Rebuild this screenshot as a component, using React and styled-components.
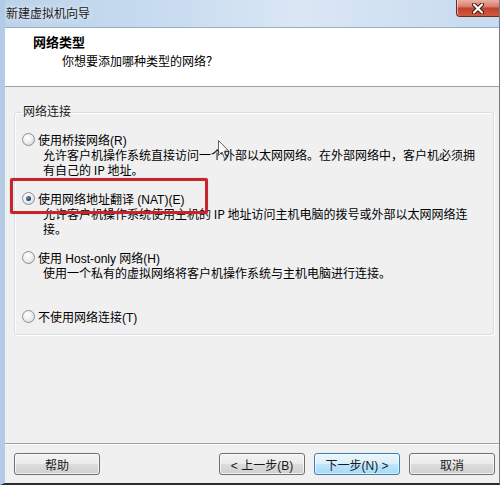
import React from "react";
import styled, { createGlobalStyle, css } from "styled-components";

const GlobalStyle = createGlobalStyle`
  html,
  body {
    margin: 0;
    padding: 0;
    background: #f0f0f0;
  }

  body {
    font-family: "Liberation Sans", "Noto Sans CJK SC", sans-serif;
    font-size: 12px;
    color: #000;
  }
`;

const Window = styled.div`
  width: 500px;
  height: 485px;
  box-sizing: border-box;
  display: flex;
  flex-direction: column;
  border-left: 5px solid #b4cbe6;
  border-right: 1px solid #6f7c8c;
  border-bottom: 2px solid #2b2b2b;
  background: #f0f0f0;
  overflow: hidden;
`;

const TitleBar = styled.div`
  height: 27px;
  flex-shrink: 0;
  display: flex;
  align-items: flex-start;
  margin-left: -5px;
  padding-left: 6px;
  background: linear-gradient(
    to right,
    #bcd2ea 0%,
    #c9dcf0 35%,
    #dae7f5 60%,
    #c7daef 100%
  );
`;

const TitleText = styled.span`
  line-height: 28px;
  color: #1a1a1a;
  text-shadow: 0 0 6px rgba(255, 255, 255, 0.9);
`;

const CloseButton = styled.div`
  margin-left: auto;
  width: 43px;
  height: 17px;
  box-sizing: border-box;
  display: flex;
  align-items: center;
  justify-content: center;
  border: 1px solid #6b2a22;
  border-top: none;
  border-right: none;
  border-radius: 0 0 0 4px;
  background: linear-gradient(
    #eab0a3 0%,
    #d8806f 40%,
    #c2412f 52%,
    #cf5a40 100%
  );
  box-shadow: inset 1px 0 0 rgba(255, 255, 255, 0.5);
`;

const Header = styled.div`
  height: 60px;
  flex-shrink: 0;
  box-sizing: border-box;
  background: #fff;
  border-top: 1px solid #98adc6;
  border-bottom: 1px solid #a0a0a0;
  padding: 7px 0 0 28px;
`;

const HeaderTitle = styled.div`
  font-weight: bold;
  font-size: 13px;
  line-height: 16px;
`;

const HeaderSubtitle = styled.div`
  margin-top: 3px;
  padding-left: 29px;
  line-height: 16px;
`;

const Body = styled.div`
  flex: 1;
  padding: 17px 5px 0 9px;
`;

const GroupBox = styled.fieldset`
  margin: 0;
  padding: 11px 7px 10px 7px;
  border: 1px solid #d5dfe5;
  border-radius: 3px;
  box-shadow: inset 1px 1px 0 #fff, 1px 1px 0 #fff;
`;

const GroupLabel = styled.legend`
  padding: 0 1px;
  line-height: 16px;
  color: #1c1c1c;
`;

const OptionRow = styled.div`
  position: relative;
  & + & {
    margin-top: 13px;
  }
`;

const LabelLine = styled.div`
  display: flex;
  align-items: center;
  gap: 3px;
  height: 16px;
  white-space: nowrap;
`;

const Radio = styled.span`
  width: 13px;
  height: 13px;
  box-sizing: border-box;
  flex-shrink: 0;
  border-radius: 50%;
  border: 1px solid #8c8f94;
  background: radial-gradient(circle at 40% 35%, #ffffff 0%, #e9ecef 55%, #c9ced4 100%);
  display: flex;
  align-items: center;
  justify-content: center;

  ${props =>
    props.checked &&
    css`
      &::after {
        content: "";
        width: 5px;
        height: 5px;
        border-radius: 50%;
        background: radial-gradient(circle at 35% 35%, #6d8fb4 0%, #1d3a5e 70%, #0c1f36 100%);
      }
    `}
`;

const Description = styled.div`
  padding-left: 21px;
  min-height: 30px;
  line-height: 15px;
  white-space: nowrap;
  font-family: "Noto Sans CJK SC", "Liberation Sans", sans-serif;
`;

const Highlight = styled.span`
  position: absolute;
  top: -12px;
  left: -12px;
  width: 198px;
  height: 36px;
  box-sizing: border-box;
  border: 3px solid #c4262c;
  border-radius: 2px;
  box-shadow: 0 0 1px rgba(120, 0, 0, 0.5);
  pointer-events: none;
  z-index: 2;
`;

const Cursor = styled.svg`
  position: absolute;
  top: 9px;
  left: 196px;
  opacity: 0.75;
  z-index: 3;
`;

const Footer = styled.div`
  height: 40px;
  flex-shrink: 0;
  box-sizing: border-box;
  display: flex;
  align-items: flex-start;
  gap: 9px;
  padding: 9px 4px 0 9px;
  border-top: 1px solid #a0a0a0;
  box-shadow: inset 0 1px 0 #fff;
`;

const Button = styled.button`
  width: 86px;
  height: 22px;
  box-sizing: border-box;
  padding: 0;
  font-family: inherit;
  font-size: 12px;
  color: #1a1a1a;
  border: 1px solid #707070;
  border-radius: 3px;
  background: linear-gradient(#f2f2f2 0%, #ebebeb 50%, #dddddd 51%, #cfcfcf 100%);
  box-shadow: inset 0 0 0 1px rgba(255, 255, 255, 0.7);
  margin-right: ${props => (props.pushRight ? "auto" : "0")};

  ${props =>
    props.focused &&
    css`
      border-color: #3c7fb1;
      background: linear-gradient(#eaf6fd 0%, #d9f0fc 50%, #bee6fd 51%, #a7d9f5 100%);
      box-shadow: inset 0 0 0 1px rgba(255, 255, 255, 0.6);
    `}
`;

const options = [
  {
    label: "使用桥接网络(R)",
    desc: [
      "允许客户机操作系统直接访问一个外部以太网网络。在外部网络中，客户机必须拥",
      "有自己的 IP 地址。"
    ]
  },
  {
    label: "使用网络地址翻译 (NAT)(E)",
    checked: true,
    highlight: true,
    desc: [
      "允许客户机操作系统使用主机的 IP 地址访问主机电脑的拨号或外部以太网网络连",
      "接。"
    ]
  },
  {
    label: "使用 Host-only 网络(H)",
    desc: ["使用一个私有的虚拟网络将客户机操作系统与主机电脑进行连接。"]
  },
  {
    label: "不使用网络连接(T)",
    desc: null
  }
];

function Option({ label, desc, checked, highlight, children }) {
  return (
    <OptionRow>
      <LabelLine>
        <Radio checked={checked} />
        <span>{label}</span>
      </LabelLine>
      {desc && (
        <Description>
          {desc.map(line => (
            <div key={line}>{line}</div>
          ))}
        </Description>
      )}
      {highlight && <Highlight />}
      {children}
    </OptionRow>
  );
}

export default function App() {
  return (
    <>
      <GlobalStyle />
      <Window>
        <TitleBar>
          <TitleText>新建虚拟机向导</TitleText>
          <CloseButton>
            <svg width="14" height="11" viewBox="0 0 14 11">
              <path d="M3 1.5 L11 9.5 M11 1.5 L3 9.5" stroke="#3a1410" strokeWidth="4" strokeLinecap="round" />
              <path d="M3 1.5 L11 9.5 M11 1.5 L3 9.5" stroke="#fff" strokeWidth="2.2" strokeLinecap="round" />
            </svg>
          </CloseButton>
        </TitleBar>

        <Header>
          <HeaderTitle>网络类型</HeaderTitle>
          <HeaderSubtitle>你想要添加哪种类型的网络？</HeaderSubtitle>
        </Header>

        <Body>
          <GroupBox>
            <GroupLabel>网络连接</GroupLabel>
            {options.map((opt, i) => (
              <Option key={opt.label} {...opt}>
                {i === 0 && (
                  <Cursor width="12" height="20" viewBox="0 0 12 20">
                    <path
                      d="M0.5 0.5 L0.5 15.5 L4 12 L6.5 18.5 L8.7 17.5 L6.2 11.2 L11 11.2 Z"
                      fill="#fff"
                      stroke="#333"
                      strokeWidth="1"
                      strokeLinejoin="round"
                    />
                  </Cursor>
                )}
              </Option>
            ))}
          </GroupBox>
        </Body>

        <Footer>
          <Button pushRight>帮助</Button>
          <Button>&lt; 上一步(B)</Button>
          <Button focused>下一步(N) &gt;</Button>
          <Button>取消</Button>
        </Footer>
      </Window>
    </>
  );
}
